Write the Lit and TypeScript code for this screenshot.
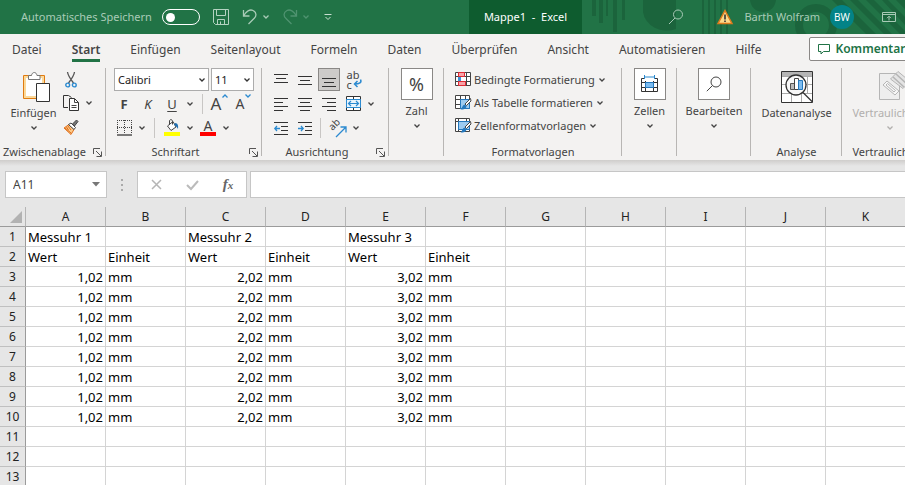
import { LitElement, html, svg, css, nothing } from "lit";
import { customElement, state } from "lit/decorators.js";

const icon = (w: number, h: number, body: unknown, cls = "") =>
  html`<svg class="icon ${cls}" width=${w} height=${h} viewBox="0 0 ${w} ${h}" fill="none" stroke="#444" aria-hidden="true">${body}</svg>`;

const chevron = (cls = "") =>
  icon(8, 6, svg`<path d="M1.500 1.500 4 4l2.500-2.500" stroke="currentColor" stroke-width="1.300"/>`, "chev " + cls);

const lines = (rows: [number, number, number][]) =>
  svg`${rows.map(([x, y, w]) => svg`<rect x=${x} y=${y} width=${w} height="1" fill="#333" stroke="none"/>`)}`;

const ICONS = {
  save: icon(16, 16, svg`<g stroke="#b4d3c1"><path d="M.5.5h15v15H2.500l-2-2z"/><path d="M3.500.5v6h9v-6M4.500 15.500v-5h7v5M7.500 12.500v3"/></g>`),
  undo: icon(16, 18, svg`<path d="M1.500 2v6h6M1.500 8C4 3 8 1 11 2.500c4 2 3.500 6 1 8L6.500 16" stroke="#a9cbb7" stroke-width="1.300"/>`),
  redo: icon(16, 18, svg`<path d="M14.500 2v6h-6M14.500 8C12 3 8 1 5 2.500c-4 2-3.500 6-1 8L9.500 16" stroke="#4f9370" stroke-width="1.300"/>`),
  custom: icon(8, 8, svg`<path d="M.5 1.500h7M1.500 4 4 6.500 6.500 4" stroke="#c9dfd1"/>`),
  search: icon(16, 16, svg`<path d="M7 9 1 15" stroke="#a9cbb7"/><circle cx="10" cy="5.500" r="4.500" stroke="#a9cbb7"/>`),
  warn: icon(16, 16, svg`<path d="M8 1.500 15 14.500H1z" fill="#fbd98a" stroke="#dd7a1c" stroke-width="1.500"/><path d="M8 5.500v5M8 11.500v1.500" stroke="#333" stroke-width="1.600"/>`),
  window: icon(14, 12, svg`<path d="M.5 1.500h13v9H.5zM.5 3.500h13M7 9.500v-4M5 7.200l2-2 2 2" stroke="#a9cbb7"/>`),
  comment: icon(12, 11, svg`<path d="M.5.5h11v7H5.500L3 10V7.500H.5z" stroke="#217346"/>`),
  paste: icon(34, 32, svg`<g transform="translate(6 0)"><path d="M.5 4.500h21v23H.5z" fill="#fff" stroke="#e07b10"/><path d="M2 6h18v20H2z" stroke="#fbd99a" stroke-width="2"/><path d="M5.500 8.500v-4h3c.5-4 5-4 5.500 0h3v4z" fill="#fff" stroke="#777"/><path d="M13.500 12.500h13v18h-13z" fill="#fff" stroke="#333"/></g>`),
  cut: icon(12, 16, svg`<path d="M2.500 0C3 4 7 9 8.500 11M9.500 0C9 4 5 9 3.500 11" stroke="#555" stroke-width="1.300"/><circle cx="2.700" cy="13" r="1.900" stroke="#2b8ad0" stroke-width="1.400"/><circle cx="9.300" cy="13" r="1.900" stroke="#2b8ad0" stroke-width="1.400"/>`),
  copy: icon(16, 16, svg`<path d="M5 12.500H.5V.5h5l3 2" stroke="#333"/><path d="M6.500 3.500h5l4 4v8h-9z" fill="#fff" stroke="#333"/><path d="M11.500 3.500v4h4M8.500 10.500h5M8.500 12.500h5"/>`),
  brush: icon(16, 16, svg`<path d="M6 5.500l5 5-3 5L1 9z" fill="#fbc98a" stroke="#e0701c"/><path d="M2 9l6 5M3.500 8l2 3M5 7l3 4" stroke="#e0701c"/><path d="M5.500 5.500 8 4l4.500 4.500-1.500 2z" fill="#fff"/><path d="M9.500 5 13.500 1l1.500 1.500L11.500 7z" fill="#777"/>`),
  border: icon(15, 16, svg`<path d="M.5 0v13M7.500 0v13M14.500 0v13M0 .5h15M0 7.500h15" stroke-dasharray="1 1"/><path d="M0 15h15" stroke="#000" stroke-width="1"/>`),
  fill: icon(16, 17, svg`<path d="M3.500 7 9 2.500 12 8l-5 3.500z" fill="#fff"/><path d="M5.500 6V1.500c1-1.500 3-1 3 1v3"/><path d="M11 4c3 0 3.500 3 3 6-1-2-2-3-4-4z" fill="#1f6fb2" stroke="none"/><path d="M0 13h16v4H0z" fill="#ff0" stroke="none"/>`),
  wrap: icon(16, 18, svg`<path d="M13.500 8.500c1.500 3-1 4.500-6 4.500M10.500 10l-3 3 3 3" stroke="#2b8ad0" stroke-width="1.500"/>`, "over"),
  merge: icon(15, 15, svg`<path d="M.5.5h14v14H.5zM7.500.5v14" fill="#fff" stroke="#333"/><path d="M.5 3.500h14v8H.5z" fill="#e9f4fc" stroke="#2b8ad0"/><path d="M2.500 7.500h10M5 5l-2.500 2.500L5 10M10 5l2.500 2.500L10 10" stroke="#2b8ad0" stroke-width="1.200"/>`),
  outdent: icon(14, 14, svg`${lines([[0, 1, 14], [7, 5, 7], [7, 9, 7], [0, 13, 14]])}<path d="M6 7.500H.8M3 5 .8 7.500 3 10" stroke="#2b8ad0" stroke-width="1.300"/>`),
  indent: icon(14, 14, svg`${lines([[0, 1, 14], [7, 5, 7], [7, 9, 7], [0, 13, 14]])}<path d="M0 7.500h5M3 5l2.200 2.500L3 10" stroke="#2b8ad0" stroke-width="1.300"/>`),
  angle: icon(12, 12, svg`<path d="M1 11 10.500 1.500M5.500 1h5.500v5.500" stroke="#2b8ad0" stroke-width="1.300"/>`, "over"),
  cond: icon(16, 15, svg`<path d="M.5.5h15v13H.5zM.5 4.500h15M.5 9.500h15M11.500.5v13" fill="#fff"/><path d="M3.500.5h6v4h-6zM3.500 9.500h7v4h-7z" fill="#f8a3a8" stroke="#e02b35"/><path d="M3 5h3v4H3z" fill="#3b93d8" stroke="none"/>`),
  asTable: icon(16, 15, svg`<path d="M.5.5h14v13H.5zM.5 4.500h14M.5 9.500h14M5.500.5v13M10.500.5v13" fill="#fff"/><path d="M5.500 4.500h9v9h-9z" fill="#9ccbf0" stroke="#2478bd"/><path d="M15.500 3.500 10 9l1.500 1.500L16 6z" fill="#fff" stroke="#444"/><path d="M9.500 9.500 11.500 11c0 3-3 3.500-6 3.500 2-1.500 1.500-4 4-5z" fill="#2478bd" stroke="none"/>`),
  cellStyle: icon(16, 15, svg`<path d="M.5.5h14v13H.5zM.5 3.500h14M3.500.5v13M11.500.5v3" fill="#fff"/><path d="M3.500 3.500h11v8h-11z" fill="#9ccbf0" stroke="#2478bd"/><path d="M15.500 3.500 10 9l1.500 1.500L16 6z" fill="#fff" stroke="#444"/><path d="M9.500 9.500 11.500 11c0 3-3 3.500-6 3.500 2-1.500 1.500-4 4-5z" fill="#2478bd" stroke="none"/>`),
  cells: icon(18, 18, svg`<path d="M.5 3.500h16v13H.5zM.5 7.500h16M.5 12.500h16M4.500 3.500v13M12.500 3.500v13" stroke="#333"/><path d="M3 0h11v6H3z" fill="#fff" stroke="none"/><path d="M4.500 7.500h8v5h-8z" fill="#7dbcf0" stroke="#2478bd"/><path d="M3.500 0v4M13.500 0v4M3.500 2h10" stroke="#2b8ad0"/>`),
  find: icon(16, 16, svg`<circle cx="10" cy="6" r="5"/><path d="M6.500 9.500.8 15.200"/>`),
  analysis: icon(32, 32, svg`<path d="M.5.5h31v31H.5z" fill="#fff" stroke="#333"/><path d="M1 1h30v4H1z" fill="#b5b5b5" stroke="none"/><path d="M1 5.500h30M1 13.500h30M1 22.500h30M10.500 22v9M20.500 22v9M26.500 5v17" stroke="#aaa"/><circle cx="15" cy="14" r="10" fill="#f8f8f8" stroke="#333" stroke-width="1.300"/><path d="M9.500 12.500h4v6h-4z" fill="#bbb" stroke="#555"/><path d="M13.500 7.500h4v11h-4z" fill="#fff"/><path d="M17.500 9.500h4v9h-4z" fill="#7dbcf0" stroke="#2478bd"/><path d="M22 21.500 31.500 31" stroke="#333" stroke-width="1.300"/>`),
  sensitivity: icon(22, 32, svg`<g stroke="#b5b5b5"><path d="M.5 2.500h20v26H.5z" fill="#eee"/><path d="M4 14l4-4 12 10-4 4z" fill="#f6f6f6"/><path d="M7 14l1.500-1.500 8 7-1.500 1.500z"/><path d="M11.500 8 19 .5l12 10-7 7z" fill="#e4e4e4"/><path d="M14 6l11 10M17 3l11 10" stroke-width="1.500"/></g>`),
  launcher: icon(9, 9, svg`<path d="M.5 6V.5H7M3 3l5 5M8.500 3.500v5h-5" stroke="#555"/>`),
};

const PATTERN = svg`
  <g fill="#1b643c">
    <path d="M10 0h4v16h-4zM17 0h4v23h-4zM24 0h2v16h-2zM31 0h4v32h-4zM40 0h3v20h-3z"/>
    <path d="M61 0v12a24 21 0 0 0 33 17V0z"/>
    <path d="M120 0h2v34h-2zM126 0h2v34h-2zM132 0h2v34h-2zM138 0h2v34h-2zM144 0h2v34h-2z"/>
    <circle cx="181" cy="-1" r="13"/>
    <path d="M250 0h10l34 34h-10zM268 0h8l34 34h-8zM284 0h8l31 31v3h-5zM300 0h6l17 17v8zM314 0h9v9z"/>
  </g>
  <circle cx="234" cy="25" r="17" fill="none" stroke="#1b643c" stroke-width="8"/>`;

const COLS = "ABCDEFGHIJK".split("");
const HEAD: Record<number, string[]> = {
  1: ["Messuhr 1", "", "Messuhr 2", "", "Messuhr 3", ""],
  2: ["Wert", "Einheit", "Wert", "Einheit", "Wert", "Einheit"],
};
const VALUES = ["1,02", "mm", "2,02", "mm", "3,02", "mm"];
const cellText = (row: number, col: number) =>
  (row < 3 ? HEAD[row][col] : row < 11 ? VALUES[col] : "") ?? "";

@customElement("app-root")
export class AppRoot extends LitElement {
  @state() private autosave = false;

  static styles = css`
    :host {
      display: flex;
      flex-direction: column;
      height: 100vh;
      overflow: hidden;
      background: #e6e6e6;
      color: #444;
      font: 11px/16px "Noto Sans", "Open Sans", sans-serif;
    }
    * { box-sizing: border-box; }
    button, select, input { font: inherit; color: inherit; margin: 0; padding: 0; border: 0; background: none; border-radius: 0; outline: 0; }
    button { display: flex; align-items: center; justify-content: center; white-space: nowrap; }
    .icon { display: block; flex: none; overflow: visible; }

    .title-bar { display: grid; grid-template-columns: minmax(0, 469fr) 113px minmax(0, 323fr); flex: none; height: 34px; background: #217346; color: #a9cbb7; }
    .title-left { display: flex; align-items: center; padding-left: 21px; }
    .autosave { display: flex; align-items: center; width: 179px; justify-content: space-between; white-space: nowrap; }
    .toggle { appearance: none; width: 38px; height: 16px; border: 1px solid #fff; border-radius: 8px; display: flex; align-items: center; padding: 0 3px; }
    .toggle::before { content: ""; width: 9px; height: 9px; border-radius: 50%; background: #fff; }
    .toggle:checked { justify-content: flex-end; }
    .save { margin-left: 13px; }
    .undo { margin-left: 13px; }
    .dim { color: #4f9370; }
    .title-bar .chev { margin-left: 4px; }
    .redo { margin-left: 12px; }
    .custom { margin-left: 14px; }
    .doc-title { display: flex; align-items: center; justify-content: center; background: #0e5c2f; color: #fff; white-space: pre; }
    .title-right { position: relative; display: flex; align-items: center; justify-content: flex-end; padding-right: 9px; overflow: hidden; }
    .pattern { position: absolute; inset: 0 0 0 auto; }
    .title-right > button { position: relative; }
    .warn { margin-left: 33px; }
    .user { margin-left: 11px; gap: 10px; }
    .avatar { width: 24px; height: 24px; line-height: 24px; border-radius: 50%; background: #038387; color: #fff; font-size: 10px; text-align: center; }
    .window { margin-left: 28px; }

    .tabs { flex: none; display: flex; height: 30px; padding-left: 12px; gap: 30px; background: #f3f2f1; font-size: 12px; overflow: hidden; }
    .tab { flex: none; height: 28px; border-top: 6px solid transparent; border-bottom: 3px solid transparent; }
    .tab.active { font-weight: 600; border-bottom-color: #217346; }
    .comments { flex: none; margin: 3px 0 0 18px; height: 24px; padding: 0 8px; gap: 5px; border: 1px solid #8a8886; border-radius: 2px; background: #fff; color: #217346; font-weight: 600; }

    .ribbon { flex: none; display: flex; height: 96px; padding-top: 4px; background: #f3f2f1; overflow: hidden; }
    .group { flex: none; display: flex; flex-direction: column; height: 92px; background: linear-gradient(#b8b6b4, #b8b6b4) right 0 top 0 / 1px 88px no-repeat; }
    .group-body { flex: 1; min-height: 0; display: flex; justify-content: center; }
    .group-name { height: 16px; display: flex; align-items: center; justify-content: center; position: relative; white-space: nowrap; }
    .launcher { position: absolute; right: 4px; top: 4px; }
    .w-clip { width: 106px; }
    .w-clip .group-body { justify-content: flex-start; padding-left: 8px; }
    .w-font { width: 156px; }
    .w-clip .group-name, .w-font .group-name, .w-align .group-name { padding-right: 17px; }
    .w-align { width: 127px; }
    .w-small { width: 55px; }
    .w-styles { width: 178px; }
    .w-edit { width: 74px; }
    .w-analysis { width: 91px; }
    .w-sens { width: 96px; background: none; }

    .big { flex-direction: column; justify-content: flex-start; width: 51px; padding-top: 3px; }
    .big .label { height: 16px; margin-top: 2px; }
    .big .chev { margin-top: 4px; }
    .big .frame { width: 32px; height: 32px; display: flex; align-items: center; justify-content: center; border: 1px solid #8a8886; background: #fff; font-size: 18px; }
    .framed { padding-top: 0; }
    .framed .label { margin-top: 3px; }
    .disabled { color: #b1afad; }
    .tools { display: grid; grid-template-columns: 24px 12px; grid-template-rows: 23px 24px 24px; align-items: center; align-content: start; justify-items: center; }

    .stack { display: flex; flex-direction: column; margin-right: auto; padding-left: 6px; }
    .row { display: flex; align-items: center; height: 24px; padding-bottom: 1px; }
    .combos { gap: 2px; padding-left: 2px; }
    .combo { position: relative; display: block; height: 23px; }
    .combo select { appearance: none; width: 95px; height: 23px; padding-left: 3px; border: 1px solid #acacac; background: #fff; color: #222; }
    .combo.size select { width: 43px; }
    .combo .chev { position: absolute; right: 3px; top: 9px; color: #333; pointer-events: none; }
    .t { width: 24px; height: 22px; }
    .c { width: 12px; height: 22px; }
    .bold { font-weight: 700; font-size: 13px; }
    .italic { font-style: italic; font-size: 13px; }
    .under { text-decoration: underline; text-underline-offset: 2px; font-size: 13px; }
    .grow { font-size: 17px; }
    .shrink { font-size: 14px; }
    .grow .chev, .shrink .chev { align-self: flex-start; color: #2b8ad0; }
    .up { transform: rotate(180deg); }
    .vr { width: 1px; height: 20px; margin: 0 5px 0 6px; background: #c8c6c4; }
    .color { flex-direction: column; font-size: 14px; line-height: 13px; }
    .color::after { content: ""; width: 16px; height: 4px; background: #f00; }

    .align { display: grid; grid-template-columns: 24px 24px 24px 24px 12px; grid-auto-rows: 24px; margin-right: auto; padding-left: 7px; }
    .align > button { height: 23px; }
    .align > .pressed { background: #cdcbc9; border: 1px solid #8a8886; width: 22px; justify-self: center; }
    .wrap { position: relative; line-height: 10px; font-size: 11px; text-align: left; }
    .over { position: absolute; left: 6px; top: 3px; }
    .orient { position: relative; }
    .ab { position: absolute; left: 2px; top: 0; transform: rotate(-45deg); font-size: 10px; line-height: 14px; }
    .orient .over { left: 9px; top: 9px; }
    .orient-cell { grid-column: 3 / span 3; display: flex; height: 23px; align-items: center; }
    .orient-cell .vr { margin-left: 3px; }

    .style-list { display: flex; flex-direction: column; margin-right: auto; padding-left: 11px; }
    .style-list button { height: 23px; justify-content: flex-start; gap: 3px; }

    .formula { flex: none; display: flex; height: 47px; padding: 11px 0 9px 5px; background: linear-gradient(#cfcdcb, #e6e6e6 6px); }
    .formula > * { height: 27px; border: 1px solid #c6c6c6; background: #fff; }
    .name-box { position: relative; width: 102px; display: block; }
    .name-box input { width: 100%; height: 25px; padding-left: 7px; font-size: 12px; }
    .name-box .icon { position: absolute; right: 6px; top: 10px; }
    .formula .dots { width: 30px; border: 0; background: none; display: flex; align-items: center; justify-content: center; }
    .fx { width: 110px; display: flex; }
    .fx button { flex: 1; font: italic 700 15px "Liberation Serif", serif; color: #666; }
    .fx small { font-size: 11px; }
    .formula .fx-input { flex: 1; min-width: 0; margin-left: 3px; border-right: 0; padding-left: 6px; }

    .sheet { flex: 1; min-height: 0; overflow: hidden; background: #fff; }
    table { table-layout: fixed; width: 906px; min-width: 100%; border-collapse: separate; border-spacing: 0; color: #000; font-size: 13px; line-height: 18px; }
    .corner-col { width: 26px; }
    .col { width: 80px; }
    th, td { height: 20px; padding: 0 2px; border: solid #d4d4d4; border-width: 0 1px 1px 0; font-weight: 400; white-space: nowrap; overflow: hidden; }
    th { background: #e6e6e6; color: #222; font-size: 12px; text-align: center; }
    thead th { border-right-color: #b5b5b5; border-bottom-color: #9b9b9b; }
    tbody th { border-right-color: #9b9b9b; border-bottom-color: #c0c0c0; padding: 0; }
    td { text-align: left; }
    .num { text-align: right; padding-right: 2px; }
    .corner .icon { margin-left: 8px; }
  `;

  private big(ic: unknown, label: string, opts: { framed?: boolean; chev?: boolean; disabled?: boolean } = {}) {
    return html`<button class="big ${opts.framed ? "framed" : ""} ${opts.disabled ? "disabled" : ""}" ?disabled=${opts.disabled}>
      ${opts.framed ? html`<span class="frame">${ic}</span>` : ic}
      <span class="label">${label}</span>${opts.chev === false ? nothing : chevron()}
    </button>`;
  }

  private group(cls: string, name: string, body: unknown, launcher = false) {
    return html`<section class="group ${cls}">
      <div class="group-body">${body}</div>
      <div class="group-name">${name}${launcher ? html`<button class="launcher" aria-label="${name} Optionen">${ICONS.launcher}</button>` : nothing}</div>
    </section>`;
  }

  private more(label: string) {
    return html`<button class="c" aria-label=${label}>${chevron()}</button>`;
  }

  private titleBar() {
    return html`<header class="title-bar">
      <div class="title-left">
        <label class="autosave">Automatisches Speichern
          <input class="toggle" type="checkbox" role="switch" .checked=${this.autosave}
            @change=${(e: Event) => (this.autosave = (e.target as HTMLInputElement).checked)} />
        </label>
        <button class="save" aria-label="Speichern">${ICONS.save}</button>
        <button class="undo" aria-label="Rückgängig">${ICONS.undo}${chevron()}</button>
        <button class="redo dim" aria-label="Wiederholen">${ICONS.redo}${chevron()}</button>
        <button class="custom" aria-label="Symbolleiste anpassen">${ICONS.custom}</button>
      </div>
      <div class="doc-title">Mappe1  -  Excel</div>
      <div class="title-right">
        <svg class="pattern" width="323" height="34" viewBox="0 0 323 34" aria-hidden="true">${PATTERN}</svg>
        <button aria-label="Suchen">${ICONS.search}</button>
        <button class="warn" aria-label="Warnung">${ICONS.warn}</button>
        <button class="user"><span>Barth Wolfram</span><span class="avatar">BW</span></button>
        <button class="window" aria-label="Menüband-Anzeigeoptionen">${ICONS.window}</button>
      </div>
    </header>`;
  }

  private ribbon() {
    return html`<div class="ribbon">
      ${this.group("w-clip", "Zwischenablage", html`
        ${this.big(ICONS.paste, "Einfügen")}
        <div class="tools">
          <button aria-label="Ausschneiden">${ICONS.cut}</button><span></span>
          <button aria-label="Kopieren">${ICONS.copy}</button>${this.more("Kopieroptionen")}
          <button aria-label="Format übertragen">${ICONS.brush}</button>
        </div>`, true)}
      ${this.group("w-font", "Schriftart", html`<div class="stack">
        <div class="row combos">
          <label class="combo"><select aria-label="Schriftart"><option>Calibri</option></select>${chevron()}</label>
          <label class="combo size"><select aria-label="Schriftgrad"><option>11</option></select>${chevron()}</label>
        </div>
        <div class="row">
          <button class="t bold">F</button><button class="t italic">K</button><button class="t under">U</button>
          ${this.more("Unterstreichen")}<span class="vr"></span>
          <button class="t grow" aria-label="Schriftgrad vergrößern">A${chevron("up")}</button>
          <button class="t shrink" aria-label="Schriftgrad verkleinern">A${chevron()}</button>
        </div>
        <div class="row">
          <button class="t" aria-label="Rahmen">${ICONS.border}</button>${this.more("Rahmenoptionen")}
          <span class="vr"></span>
          <button class="t" aria-label="Füllfarbe">${ICONS.fill}</button>${this.more("Füllfarben")}
          <button class="t color" aria-label="Schriftfarbe">A</button>${this.more("Schriftfarben")}
        </div></div>`, true)}
      ${this.group("w-align", "Ausrichtung", html`<div class="align">
        <button aria-label="Oben">${icon(14, 14, lines([[0, 1, 14], [2, 5, 10], [0, 9, 14]]))}</button>
        <button aria-label="Mitte">${icon(14, 14, lines([[0, 3, 14], [2, 7, 10], [0, 11, 14]]))}</button>
        <button class="pressed" aria-label="Unten">${icon(14, 14, lines([[0, 5, 14], [2, 9, 10], [0, 13, 14]]))}</button>
        <button class="wrap" aria-label="Textumbruch"><span>ab<br />c</span>${ICONS.wrap}</button><span></span>
        <button aria-label="Linksbündig">${icon(14, 14, lines([[0, 1, 14], [0, 5, 9], [0, 9, 14], [0, 13, 9]]))}</button>
        <button aria-label="Zentriert">${icon(14, 14, lines([[0, 1, 14], [2, 5, 10], [0, 9, 14], [2, 13, 10]]))}</button>
        <button aria-label="Rechtsbündig">${icon(14, 14, lines([[0, 1, 14], [5, 5, 9], [0, 9, 14], [5, 13, 9]]))}</button>
        <button aria-label="Verbinden und zentrieren">${ICONS.merge}</button>${this.more("Verbinden")}
        <button aria-label="Einzug verkleinern">${ICONS.outdent}</button>
        <button aria-label="Einzug vergrößern">${ICONS.indent}</button>
        <div class="orient-cell"><span class="vr"></span>
          <button class="t orient" aria-label="Ausrichtung"><span class="ab">ab</span>${ICONS.angle}</button>${this.more("Drehen")}
        </div></div>`, true)}
      ${this.group("w-small", "", this.big("%", "Zahl", { framed: true }))}
      ${this.group("w-styles", "Formatvorlagen", html`<div class="style-list">
        <button>${ICONS.cond}Bedingte Formatierung${chevron()}</button>
        <button>${ICONS.asTable}Als Tabelle formatieren${chevron()}</button>
        <button>${ICONS.cellStyle}Zellenformatvorlagen${chevron()}</button></div>`)}
      ${this.group("w-small", "", this.big(ICONS.cells, "Zellen", { framed: true }))}
      ${this.group("w-edit", "", this.big(ICONS.find, "Bearbeiten", { framed: true }))}
      ${this.group("w-analysis", "Analyse", this.big(ICONS.analysis, "Datenanalyse", { chev: false }))}
      ${this.group("w-sens", "Vertraulichkeit", this.big(ICONS.sensitivity, "Vertraulichkeit", { disabled: true }))}
    </div>`;
  }

  render() {
    const tabs = ["Datei", "Start", "Einfügen", "Seitenlayout", "Formeln", "Daten", "Überprüfen", "Ansicht", "Automatisieren", "Hilfe"];
    return html`
      ${this.titleBar()}
      <nav class="tabs">
        ${tabs.map((t) => html`<button class="tab ${t === "Start" ? "active" : ""}">${t}</button>`)}
        <button class="comments">${ICONS.comment}Kommentare</button>
      </nav>
      ${this.ribbon()}
      <div class="formula">
        <label class="name-box"><input aria-label="Namenfeld" value="A11" />${icon(8, 5, svg`<path d="M0 0h8L4 4.500z" fill="#777" stroke="none"/>`)}</label>
        <span class="dots">${icon(2, 12, svg`<path d="M0 0h2v2H0zM0 5h2v2H0zM0 10h2v2H0z" fill="#aaa" stroke="none"/>`)}</span>
        <div class="fx">
          <button aria-label="Abbrechen">${icon(11, 11, svg`<path d="M1 1l9 9M10 1l-9 9" stroke="#b5b5b5" stroke-width="1.500"/>`)}</button>
          <button aria-label="Eingeben">${icon(13, 10, svg`<path d="M1 5l4 4 7-8" stroke="#bbb" stroke-width="2"/>`)}</button>
          <button aria-label="Funktion einfügen"><i>f</i><small>x</small></button>
        </div>
        <input class="fx-input" aria-label="Bearbeitungsleiste" />
      </div>
      <main class="sheet">
        <table>
          <colgroup><col class="corner-col" />${COLS.map(() => html`<col class="col" />`)}</colgroup>
          <thead><tr><th class="corner">${icon(12, 12, svg`<path d="M12 0v12H0z" fill="#b2b2b2" stroke="none"/>`)}</th>
            ${COLS.map((c) => html`<th scope="col">${c}</th>`)}</tr></thead>
          <tbody>
            ${Array.from({ length: 13 }, (_, i) => i + 1).map((r) => html`<tr><th scope="row">${r}</th>
              ${COLS.map((_, c) => html`<td class=${r > 2 && c % 2 === 0 ? "num" : ""}>${cellText(r, c)}</td>`)}</tr>`)}
          </tbody>
        </table>
      </main>`;
  }
}
